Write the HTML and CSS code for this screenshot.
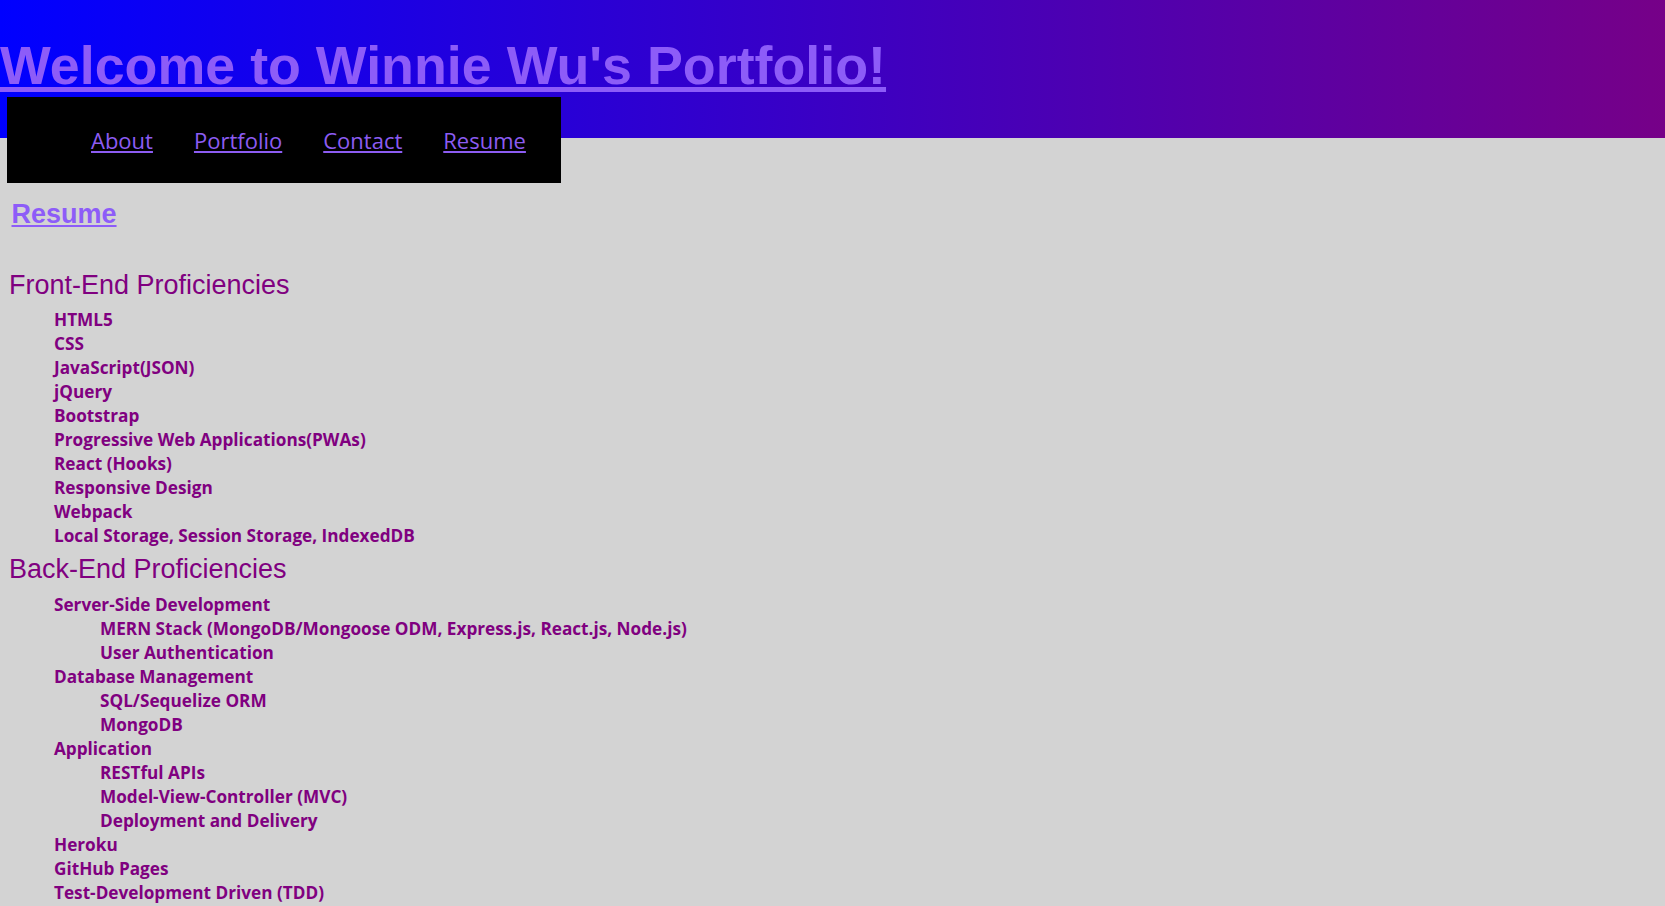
FILE: index.html
```html
<!DOCTYPE html>
<html lang="en">
<head>
<meta charset="utf-8">
<title>Winnie Wu's Portfolio</title>
<link rel="stylesheet" href="styles.css">
</head>
<body>
<header class="banner">
  <h1 class="title"><a href="#">Welcome to Winnie Wu's Portfolio!</a></h1>
  <nav class="nav">
    <a href="#">About</a>
    <a href="#">Portfolio</a>
    <a href="#">Contact</a>
    <a href="#">Resume</a>
  </nav>
</header>
<main class="main">
  <h2 class="page-title"><a href="#">Resume</a></h2>
  <section class="skills skills-front">
    <h3 class="skills-heading">Front-End Proficiencies</h3>
    <ul class="skill-list">
      <li>HTML5</li>
      <li>CSS</li>
      <li>JavaScript(JSON)</li>
      <li>jQuery</li>
      <li>Bootstrap</li>
      <li>Progressive Web Applications(PWAs)</li>
      <li>React (Hooks)</li>
      <li>Responsive Design</li>
      <li>Webpack</li>
      <li>Local Storage, Session Storage, IndexedDB</li>
    </ul>
  </section>
  <section class="skills skills-back">
    <h3 class="skills-heading">Back-End Proficiencies</h3>
    <ul class="skill-list">
      <li>Server-Side Development
        <ul class="skill-list">
          <li>MERN Stack (MongoDB/Mongoose ODM, Express.js, React.js, Node.js)</li>
          <li>User Authentication</li>
        </ul>
      </li>
      <li>Database Management
        <ul class="skill-list">
          <li>SQL/Sequelize ORM</li>
          <li>MongoDB</li>
        </ul>
      </li>
      <li>Application
        <ul class="skill-list">
          <li>RESTful APIs</li>
          <li>Model-View-Controller (MVC)</li>
          <li>Deployment and Delivery</li>
        </ul>
      </li>
      <li>Heroku</li>
      <li>GitHub Pages</li>
      <li>Test-Development Driven (TDD)</li>
    </ul>
  </section>
</main>
</body>
</html>
```

FILE: styles.css
```css
html, body {
  margin: 0;
  padding: 0;
  background: #d3d3d3;
}

body {
  font-family: "Liberation Sans", Arial, sans-serif;
}

.banner {
  background: linear-gradient(to right, #0000ff, #760088) top left / 100% 138px no-repeat;
  padding-top: 34px;
}

.title {
  margin: 0;
  font-size: 53.8px;
  line-height: 62px;
  font-weight: bold;
  white-space: nowrap;
}

.title a {
  color: #8d5cf8;
}

.nav {
  margin: 1px 0 0 7px;
  width: 554px;
  height: 86px;
  box-sizing: border-box;
  background: #000;
  display: flex;
  align-items: center;
  gap: 41px;
  padding-left: 84px;
  font-family: "Open Sans", "Noto Sans", sans-serif;
  font-size: 22px;
}

.nav a {
  color: #8c5cf2;
}

.main {
  padding: 16px 8px 0 8px;
}

.page-title {
  margin: 0 0 0 3.5px;
  font-size: 27px;
  line-height: 31px;
  font-weight: bold;
}

.page-title a {
  color: #8d5cf8;
}

.skills-heading {
  margin: 0 0 0 1px;
  font-size: 27px;
  line-height: 31px;
  font-weight: normal;
  color: #800080;
}

.skills-front .skills-heading {
  margin-top: 40px;
}

.skills-back .skills-heading {
  margin-top: 6px;
}

.skill-list {
  list-style: none;
  margin: 0;
  padding: 0 0 0 46px;
  font-family: "Open Sans", "Noto Sans", sans-serif;
  font-size: 17.2px;
  line-height: 24px;
  font-weight: bold;
  color: #800080;
}

.skills-front > .skill-list {
  margin-top: 7px;
}

.skills-back > .skill-list {
  margin-top: 8px;
}
```
